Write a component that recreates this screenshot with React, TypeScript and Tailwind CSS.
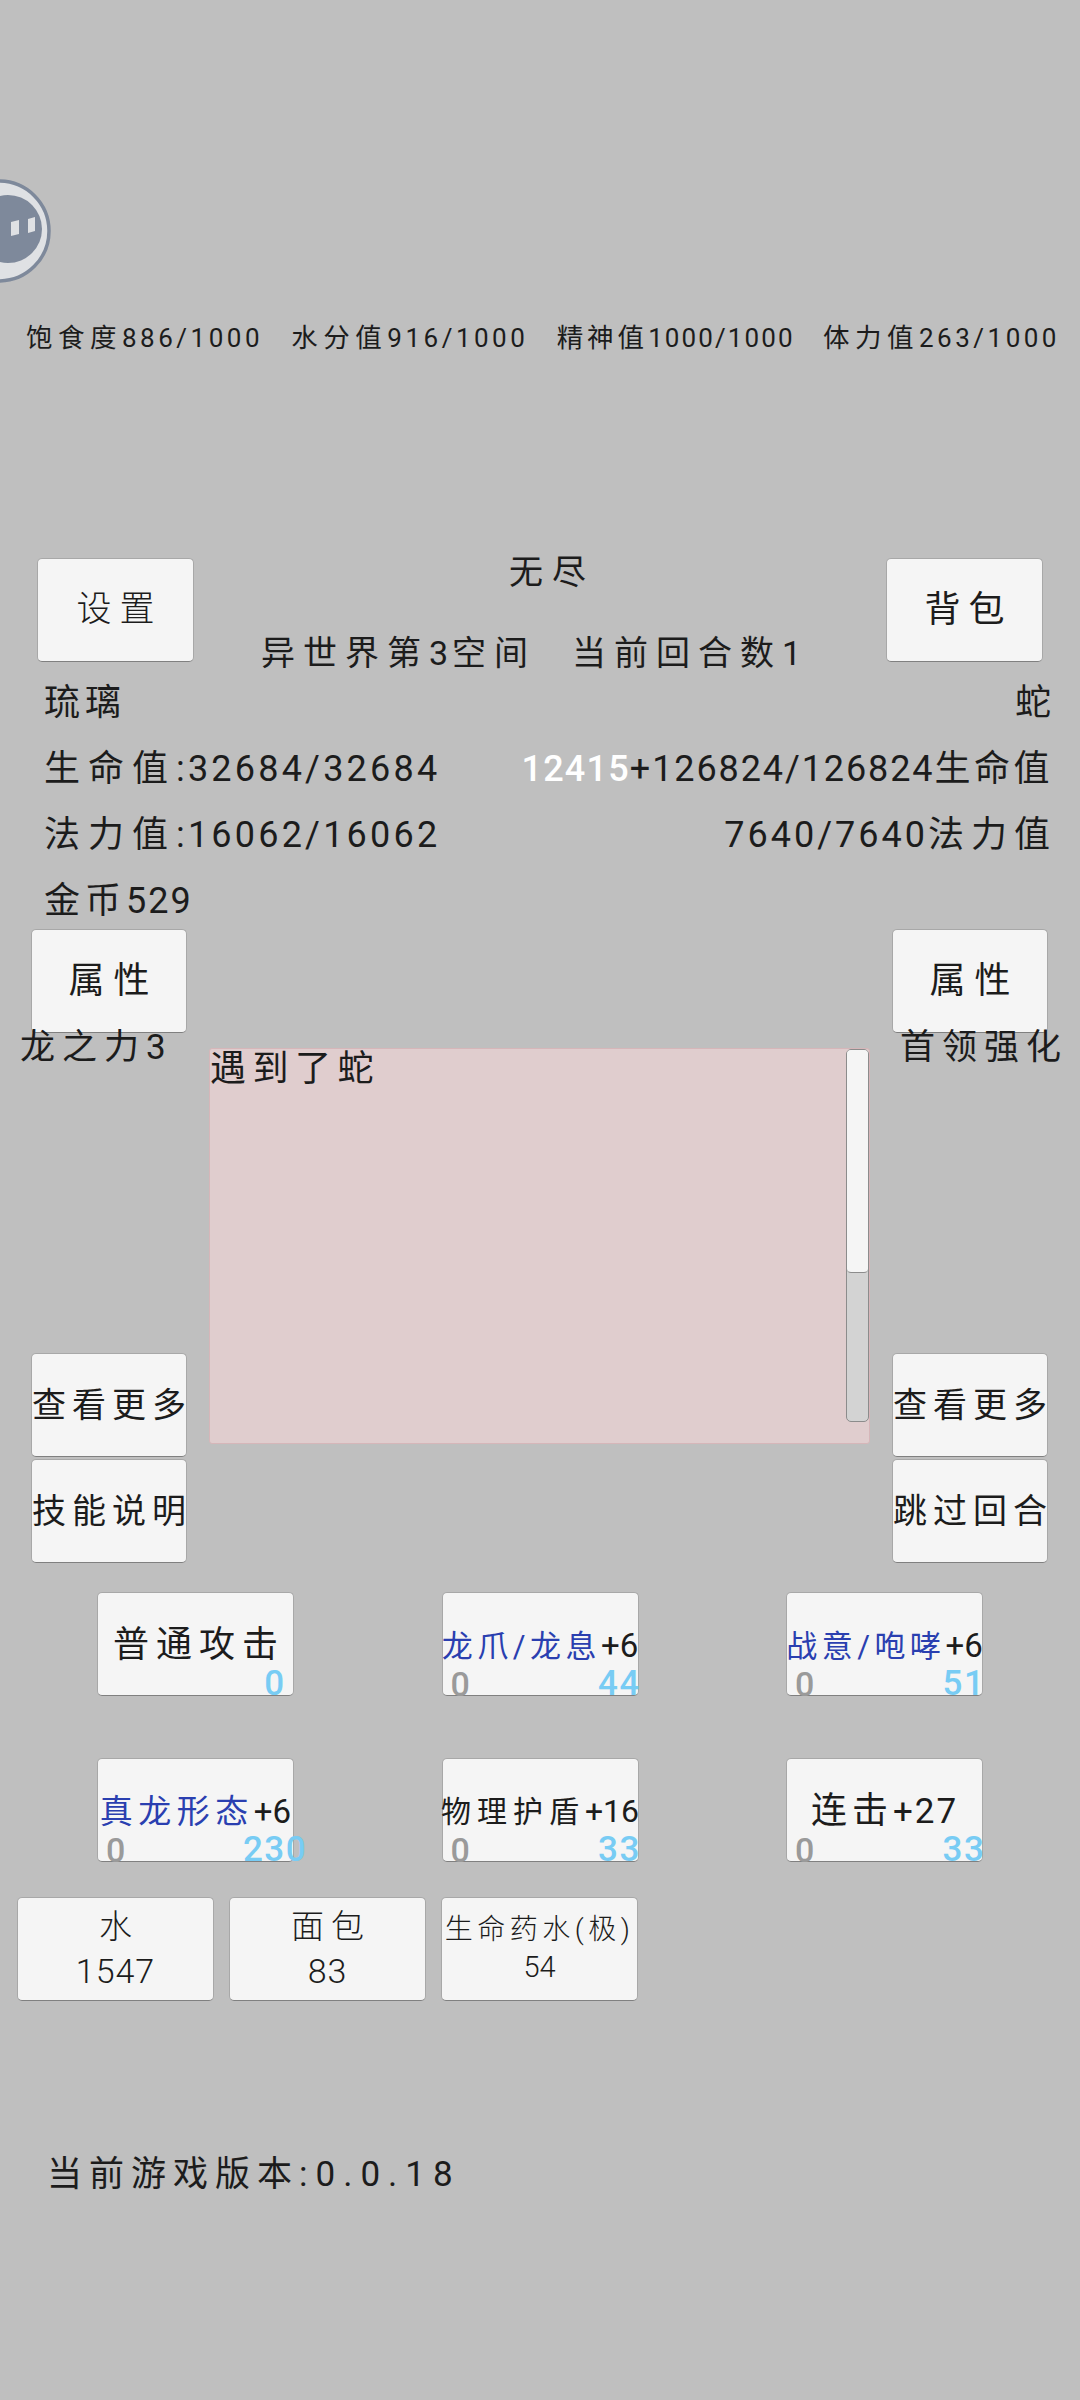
import React from "react";

function Btn({ className = "", children }: { className?: string; children?: React.ReactNode }) {
  return (
    <div className={"relative flex flex-col items-center justify-center rounded-[5px] border border-[#a8a8a8] border-b-[#808080] bg-[#f5f5f5] text-[#1c1c1c] whitespace-nowrap " + className}>
      {children}
    </div>
  );
}

function Mix({ text, cjk, latin }: { text: string; cjk: string; latin: string }) {
  const parts = text.match(/[\u4e00-\u9fff]+|[^\u4e00-\u9fff]+/g) || [];
  return (
    <>
      {parts.map((p, i) => (
        <span key={i} className={/[\u4e00-\u9fff]/.test(p) ? cjk : latin}>{p}</span>
      ))}
    </>
  );
}

function Skill({ children, cd, showZero = true, className = "" }: { children: React.ReactNode; cd: string; showZero?: boolean; className?: string }) {
  return (
    <Btn className={"h-[104px] w-[197px] pt-[2px] " + className}>
      <div className="leading-none">{children}</div>
      {showZero && <span className="absolute bottom-[-7px] left-[8px] text-[34px] leading-[36px] font-medium text-[#9a9a9a]">0</span>}
      <span className="absolute bottom-[-7px] left-[177px] -translate-x-1/2 text-[35px] leading-[36px] font-medium tracking-[1.5px] text-[#78ccf4]">{cd}</span>
    </Btn>
  );
}

function Item({ name, count, small = false }: { name: string; count: string; small?: boolean }) {
  return (
    <Btn className="h-[104px] w-[197px] font-light">
      <div className={small ? "text-[28px] leading-[36px] tracking-[4.5px]" : "pl-[7px] text-[33px] leading-[44px] tracking-[7px]"}>{name}</div>
      <div className={small ? "text-[29px] leading-[38px]" : "text-[34px] leading-[44px] tracking-[1px]"}>{count}</div>
    </Btn>
  );
}

export default function App() {
  const st = "text-[26.5px] tracking-[5.5px]";
  const sd = "text-[26px] tracking-[3.5px]";
  const bc = "tracking-[8px]";
  const bd = "tracking-[3.2px]";
  return (
    <div className="relative flex h-[2400px] w-[1080px] flex-col overflow-hidden bg-[#bfbfbf] font-[Roboto,'Noto_Sans_CJK_SC',sans-serif] text-[#1c1c1c]">
      <svg className="absolute left-0 top-[178px]" width="54" height="106" viewBox="0 0 54 106">
        <circle cx="-1" cy="53" r="50" fill="#dfe1e4" stroke="#7e899b" strokeWidth="3.5" />
        <circle cx="8" cy="51" r="34" fill="#7e899b" />
        <path d="M11 44 L19 42 L19 56 L11 58 Z" fill="#dfe1e4" />
        <path d="M28 41 L35 39 L35 53 L28 55 Z" fill="#dfe1e4" />
      </svg>

      <div className="mt-[318px] flex h-[40px] items-center justify-between pl-[26px] pr-[20px] whitespace-nowrap">
        <span><Mix text="饱食度886/1000" cjk={st} latin={sd} /></span>
        <span><Mix text="水分值916/1000" cjk={st} latin={sd} /></span>
        <span><Mix text="精神值1000/1000" cjk="text-[26.5px] tracking-[4px]" latin="text-[26px] tracking-[2.1px]" /></span>
        <span><Mix text="体力值263/1000" cjk={st} latin={sd} /></span>
      </div>

      <div className="mt-[200px] flex h-[104px] justify-between pl-[37px] pr-[37px]">
        <Btn className="h-[104px] w-[157px] pl-[8px] text-[35px] font-light tracking-[8px]">设置</Btn>
        <div className="relative flex-1 text-[34px]">
          <div className="absolute left-[315px] top-[-6px] leading-[40px] tracking-[9px]">无尽</div>
          <div className="absolute left-[67px] top-[75px] flex leading-[40px] whitespace-pre">
            <span><Mix text="异世界第3空间" cjk="tracking-[8px]" latin="tracking-[4px]" /></span>
            <span className="ml-[36px]"><Mix text="当前回合数1" cjk="tracking-[8px]" latin="tracking-[2px]" /></span>
          </div>
        </div>
        <Btn className="h-[104px] w-[157px] pl-[8px] text-[36px] tracking-[8px]">背包</Btn>
      </div>

      <div className="flex flex-col pl-[44px] pr-[29px] pt-[8px] text-[36px]">
        <div className="flex h-[66px] items-center justify-between"><span className="tracking-[5px]">琉璃</span><span>蛇</span></div>
        <div className="flex h-[66px] items-center justify-between">
          <span><Mix text="生命值:32684/32684" cjk={bc} latin={bd} /></span>
          <span className="-mr-[2px] whitespace-nowrap"><span className="font-medium tracking-[1.2px] text-white">12415</span><span className="tracking-[1.9px]">+126824/126824</span><span className="tracking-[3.5px]">生命值</span></span>
        </div>
        <div className="flex h-[66px] items-center justify-between">
          <span><Mix text="法力值:16062/16062" cjk={bc} latin={bd} /></span>
          <span className="-mr-[6px]"><Mix text="7640/7640法力值" cjk="tracking-[7px]" latin="tracking-[3px]" /></span>
        </div>
        <div className="flex h-[66px] items-center"><Mix text="金币529" cjk="tracking-[5px]" latin="tracking-[2px]" /></div>
      </div>

      <div className="-mt-[5px] flex h-[634px] justify-between pl-[31px] pr-[32px]">
        <div className="relative flex w-[156px] flex-col">
          <Btn className="h-[104px] w-[156px] pl-[9px] text-[36px] tracking-[9px]">属性</Btn>
          <div className="absolute left-[-11px] top-[97px] text-[35px] leading-[44px] whitespace-nowrap"><Mix text="龙之力3" cjk="tracking-[7px]" latin="" /></div>
          <div className="mt-auto flex flex-col gap-[2px]">
            <Btn className="h-[104px] w-[156px] pl-[6px] text-[34px] tracking-[6px]">查看更多</Btn>
            <Btn className="h-[104px] w-[156px] pl-[6px] text-[34px] tracking-[6px]">技能说明</Btn>
          </div>
        </div>

        <div className="relative mt-[119px] h-[396px] w-[661px] rounded-[3px] border border-[#d6b6b9] bg-[#e0cdce] text-[36px] leading-[40px] tracking-[6.5px]">
          <div>遇到了蛇</div>
          <div className="absolute right-0 top-0 flex h-[373px] w-[23px] flex-col overflow-hidden rounded-[5px] border border-[#8c8c8c] bg-[#d3d3d3]">
            <div className="h-[223px] rounded-b-[4px] border-b border-[#8c8c8c] bg-[#f5f5f5]" />
          </div>
        </div>

        <div className="relative flex w-[156px] flex-col">
          <Btn className="h-[104px] w-[156px] pl-[9px] text-[36px] tracking-[9px]">属性</Btn>
          <div className="absolute left-[8px] top-[97px] text-[35px] leading-[44px] tracking-[7px] whitespace-nowrap">首领强化</div>
          <div className="mt-auto flex flex-col gap-[2px]">
            <Btn className="h-[104px] w-[156px] pl-[6px] text-[34px] tracking-[6px]">查看更多</Btn>
            <Btn className="h-[104px] w-[156px] pl-[6px] text-[34px] tracking-[6px]">跳过回合</Btn>
          </div>
        </div>
      </div>

      <div className="mt-[29px] grid grid-cols-[197px_197px_197px] justify-between gap-y-[62px] pl-[97px] pr-[97px]">
        <Skill showZero={false} cd="0" className="pl-[7px]"><span className="text-[36px] tracking-[7px]">普通攻击</span></Skill>
        <Skill cd="44"><span className="text-[31px] tracking-[4.5px] text-[#2a3fb0]">龙爪/龙息</span><span className="text-[33px]">+6</span></Skill>
        <Skill cd="51"><span className="text-[31px] tracking-[4.5px] text-[#2a3fb0]">战意/咆哮</span><span className="text-[33px]">+6</span></Skill>
        <Skill cd="230"><span className="text-[33px] tracking-[5.5px] text-[#2a3fb0]">真龙形态</span><span className="text-[33px]">+6</span></Skill>
        <Skill cd="33"><span className="text-[30px] tracking-[6px]">物理护盾</span><span className="text-[32px]">+16</span></Skill>
        <Skill cd="33"><span className="text-[36px] tracking-[5px]">连击</span><span className="text-[35px] tracking-[2px]">+27</span></Skill>
      </div>

      <div className="mt-[35px] flex gap-[15px] pl-[17px]">
        <Item name="水" count="1547" />
        <Item name="面包" count="83" />
        <Item name="生命药水(极)" count="54" small />
      </div>

      <div className="mt-[152px] pl-[47px] text-[35px] leading-[44px]"><Mix text="当前游戏版本:0.0.18" cjk="tracking-[7px]" latin="tracking-[8px]" /></div>
    </div>
  );
}
